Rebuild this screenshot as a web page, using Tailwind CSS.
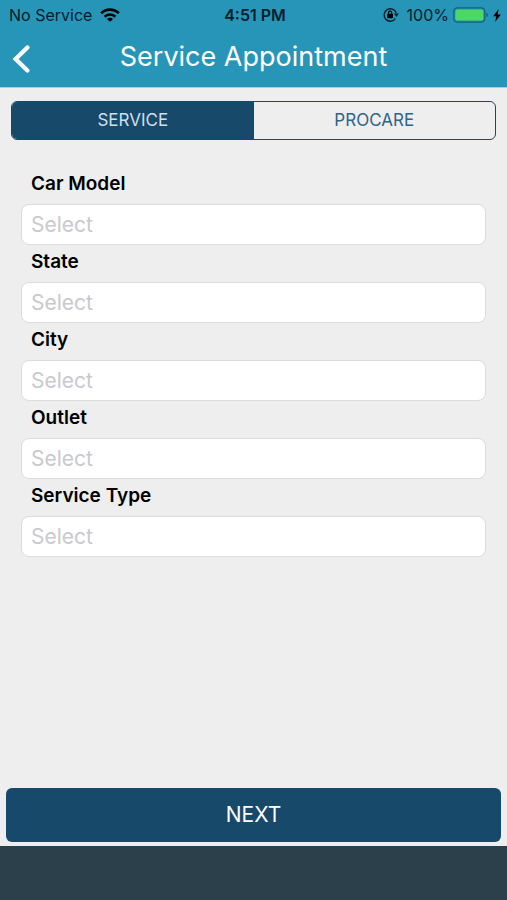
<!DOCTYPE html>
<html lang="en">

<head>
  <meta charset="UTF-8">
  <meta name="viewport" content="width=device-width, initial-scale=1.0">
  <title>Service Appointment</title>
  <script src="https://cdn.jsdelivr.net/npm/@tailwindcss/browser@4"></script>
</head>

<body class="bg-[#eeeeee] min-h-screen flex flex-col font-[Inter,sans-serif] text-black">

  <!-- Header -->
  <header class="bg-[#2795b8] border-b border-[#a9cfdc]">
    <!-- Status bar -->
    <div class="grid grid-cols-3 items-center h-[30px] pl-[9px] pr-[6px] text-base text-[#06202b]">
      <div class="flex items-center gap-2 whitespace-nowrap">
        <span>No Service</span>
        <svg class="w-5 h-[14px]" viewBox="0 0 20 14" fill="none" stroke="#000" stroke-width="2.6">
          <path d="M1.2 5.2a12.6 12.6 0 0 1 17.6 0" />
          <path d="M4.6 8.7a7.7 7.7 0 0 1 10.8 0" />
          <path d="M10 13.8 7 10.9a4.2 4.2 0 0 1 6 0z" fill="#000" stroke="none" />
        </svg>
      </div>
      <div class="text-center font-semibold whitespace-nowrap">4:51 PM</div>
      <div class="flex items-center justify-end whitespace-nowrap">
        <svg class="w-4 h-4 mr-2 shrink-0" viewBox="0 0 16 16" fill="none" stroke="#06202b" stroke-width="1.4">
          <path d="M12.4 11.6A6.2 6.2 0 1 1 13.2 6" />
          <path d="M11 6.4h4.8l-2.4 3.6z" fill="#06202b" stroke="none" />
          <rect x="4.2" y="6.8" width="5.8" height="4.4" rx=".6" fill="#000" stroke="none" />
          <path d="M5.5 7V5.8a1.6 1.6 0 0 1 3.2 0V7" stroke="#000" stroke-width="1.2" />
        </svg>
        <span>100%</span>
        <svg class="w-9 h-4 ml-1 shrink-0" viewBox="0 0 36 16">
          <rect x=".8" y=".8" width="31" height="14.4" rx="3.6" fill="none" stroke="#14607a" stroke-width="1.2" />
          <rect x="2.4" y="2.4" width="27.8" height="11.2" rx="2" fill="#4bd964" />
          <path d="M33.4 5.6c2 .8 2 4 0 4.8z" fill="#14607a" />
        </svg>
        <svg class="w-2 h-[13px] ml-1 shrink-0" viewBox="0 0 8 13" fill="#000">
          <path d="M5.6 0 .2 7.2h3L2.2 13 7.8 5.4H4.7z" />
        </svg>
      </div>
    </div>

    <!-- Title bar -->
    <div class="grid grid-cols-[48px_1fr_48px] items-center h-[57px] pb-1">
      <button type="button" aria-label="Back" class="pl-3 pt-1">
        <svg class="w-[18px] h-[30px]" viewBox="0 0 18 30" fill="none" stroke="#fff" stroke-width="4.2"
          stroke-linecap="round" stroke-linejoin="miter">
          <path d="M15.4 3.4 3.6 15 15.4 26.6" />
        </svg>
      </button>
      <h1 class="text-center text-[27px] leading-8 text-white whitespace-nowrap">Service Appointment</h1>
    </div>
  </header>

  <main class="flex-1 flex flex-col">
    <!-- Tabs -->
    <div class="flex mt-[13px] mx-[11px] h-[39px] rounded-md border border-[#17496b] overflow-hidden text-[17px]">
      <button type="button" class="w-1/2 bg-[#17496b] text-[#cfdfec]">SERVICE</button>
      <button type="button" class="w-1/2 text-[#2f6488]">PROCARE</button>
    </div>

    <!-- Form -->
    <form id="appointmentForm" class="mt-[27px] mx-[21px]">
      <label for="carModel" class="flex items-center h-[37px] pl-[10px] pb-[2px] text-[19px] font-semibold">Car Model</label>
      <select id="carModel"
        class="appearance-none block w-full h-[41px] px-[9px] bg-white border border-[#dcdcdc] rounded-lg text-[21px] leading-7 text-[#c9c9ce]">
        <option>Select</option>
      </select>
      <label for="state" class="flex items-center h-[37px] pl-[10px] pb-[2px] text-[19px] font-semibold">State</label>
      <select id="state"
        class="appearance-none block w-full h-[41px] px-[9px] bg-white border border-[#dcdcdc] rounded-lg text-[21px] leading-7 text-[#c9c9ce]">
        <option>Select</option>
      </select>
      <label for="city" class="flex items-center h-[37px] pl-[10px] pb-[2px] text-[19px] font-semibold">City</label>
      <select id="city"
        class="appearance-none block w-full h-[41px] px-[9px] bg-white border border-[#dcdcdc] rounded-lg text-[21px] leading-7 text-[#c9c9ce]">
        <option>Select</option>
      </select>
      <label for="outlet" class="flex items-center h-[37px] pl-[10px] pb-[2px] text-[19px] font-semibold">Outlet</label>
      <select id="outlet"
        class="appearance-none block w-full h-[41px] px-[9px] bg-white border border-[#dcdcdc] rounded-lg text-[21px] leading-7 text-[#c9c9ce]">
        <option>Select</option>
      </select>
      <label for="serviceType" class="flex items-center h-[37px] pl-[10px] pb-[2px] text-[19px] font-semibold">Service Type</label>
      <select id="serviceType"
        class="appearance-none block w-full h-[41px] px-[9px] bg-white border border-[#dcdcdc] rounded-lg text-[21px] leading-7 text-[#c9c9ce]">
        <option>Select</option>
      </select>
    </form>

    <div class="mt-auto px-[6px] pb-1">
      <button type="submit" form="appointmentForm"
        class="block w-full h-[54px] rounded-md bg-[#17496b] text-white text-[21px]">NEXT</button>
    </div>
  </main>

  <!-- Bottom bar -->
  <footer class="h-[54px] bg-[#2b404b]"></footer>

</body>

</html>
